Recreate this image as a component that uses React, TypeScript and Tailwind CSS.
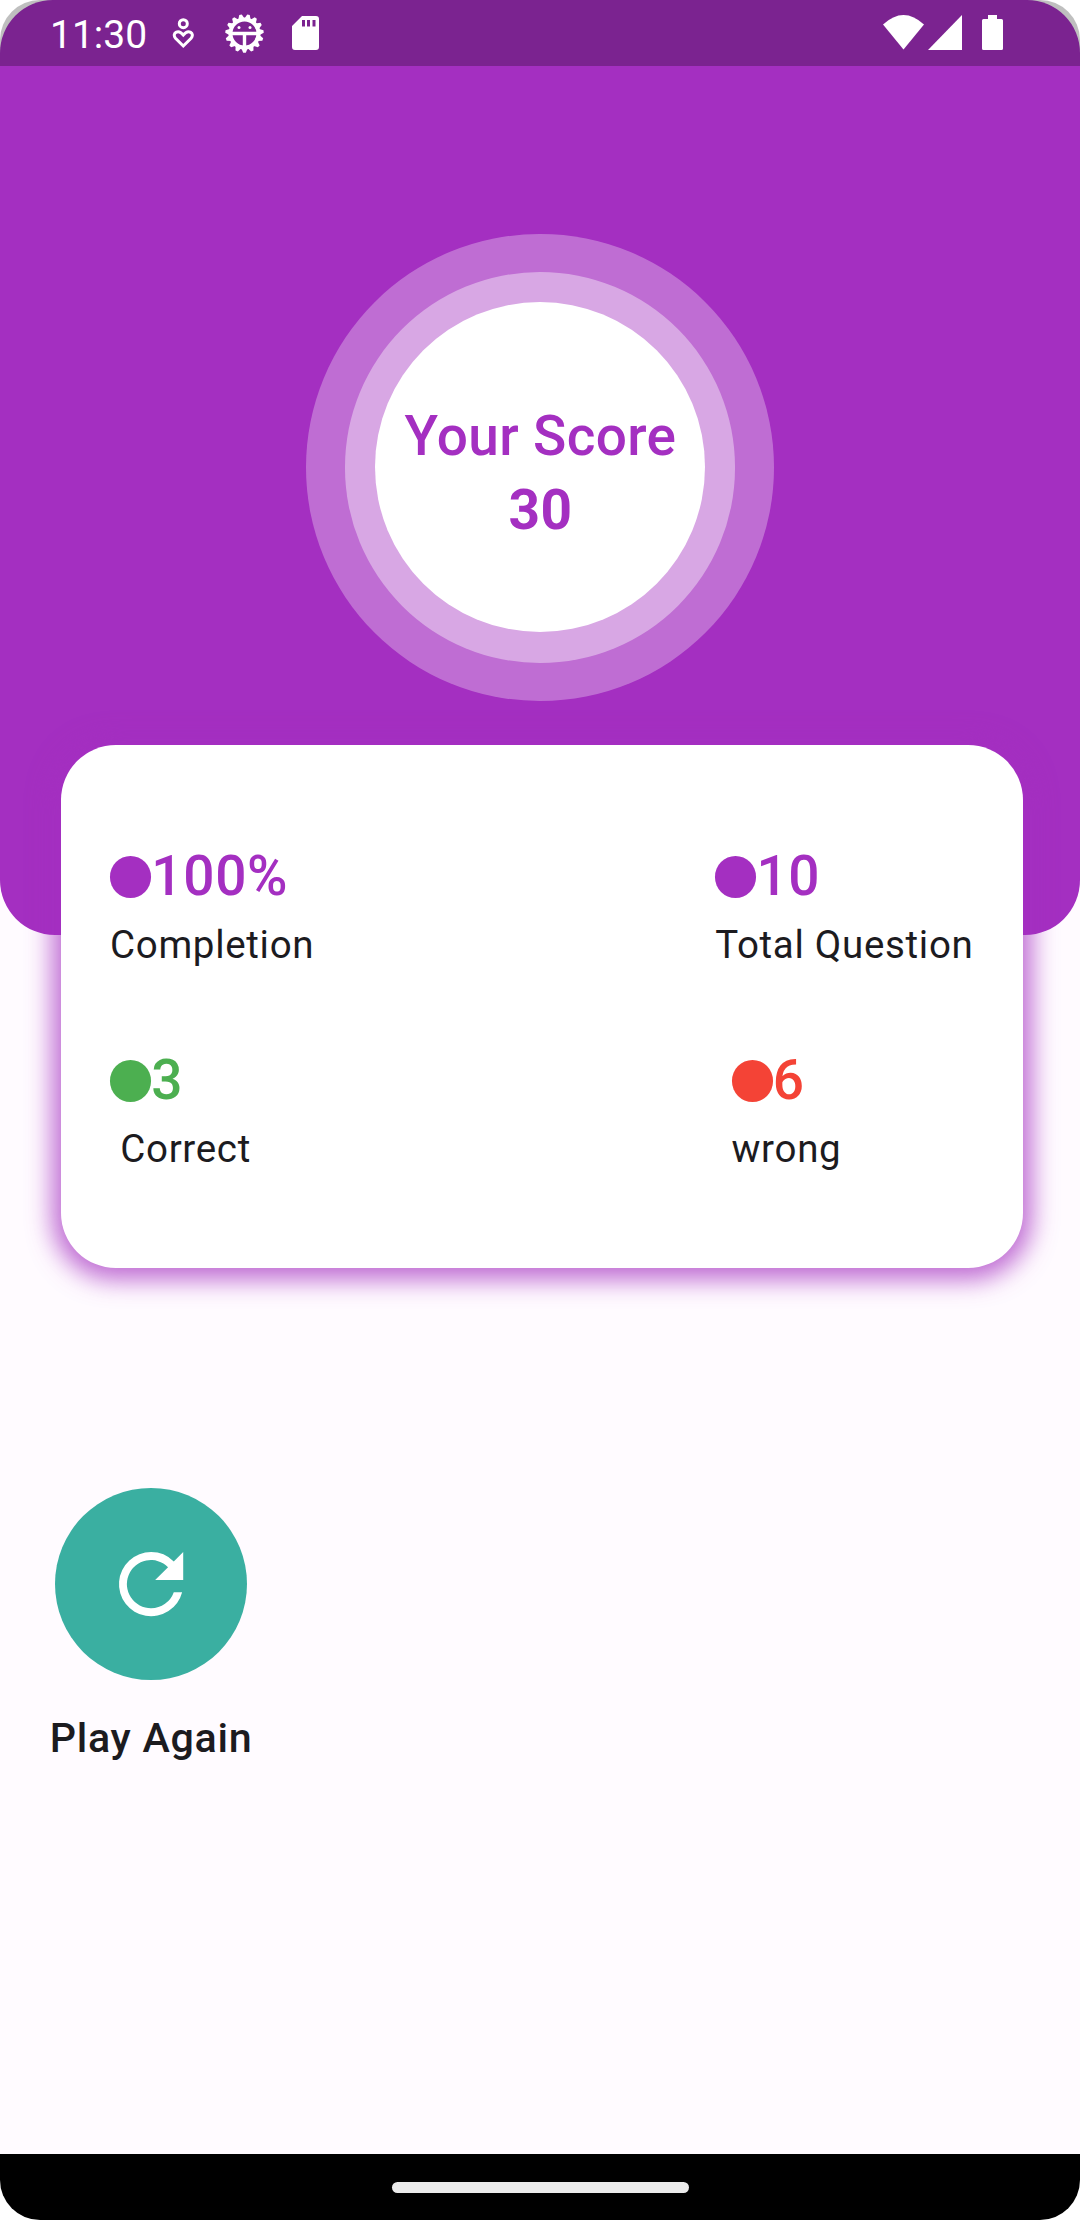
import React from "react";

function Stat({ value, label, color, dot, className = "" }: { value: string; label: string; color: string; dot: string; className?: string }) {
  return (
    <div className={`flex flex-col ${className}`}>
      <div className="flex h-[79px] items-center">
        <span className={`mt-[3px] size-[41.25px] shrink-0 rounded-full ${dot}`} />
        <span className={`pt-[2px] text-[55px] leading-[79px] font-medium tracking-[0.69px] ${color}`}>{value}</span>
      </div>
      <span className="mt-[2px] whitespace-pre text-[38.5px] leading-[55px] tracking-[0.69px] text-[#1c1b1f]">{label}</span>
    </div>
  );
}

const teeth = Array.from({ length: 15 }, (_, i) => i * 24);

function StatusBar() {
  return (
    <header className="flex h-[66px] items-start rounded-t-[40px] bg-black/25 text-white">
      <span className="ml-[50px] mt-[12px] w-[122px] text-[39px] leading-[46px]">11:30</span>
      <svg className="mt-[18px]" width="22" height="31" viewBox="0 0 22 31" fill="none" stroke="white" strokeWidth="3">
        <circle cx="11.3" cy="5.7" r="4" />
        <path d="M11.3 28 L3.5 20.2 C-0.5 15.5 6 10.5 11.3 17 C16.6 10.5 23.1 15.5 19.1 20.2 Z" />
      </svg>
      <svg className="ml-[31px] mt-[14px]" width="39" height="39" viewBox="0 0 39 39" fill="none" stroke="white">
        <circle cx="19.5" cy="19.5" r="14" strokeWidth="4" />
        {teeth.map((a) => (
          <path key={a} d="M16.200 5L18.200 0.300H20.800L22.800 5Z" fill="white" stroke="none" transform={`rotate(${a + 180} 19.5 19.5)`} />
        ))}
        <path d="M6 19.500H33M19.500 19.500V33" strokeWidth="3.4" />
        <circle cx="14" cy="13.5" r="1.500" fill="white" stroke="none" />
        <circle cx="25" cy="13.5" r="1.500" fill="white" stroke="none" />
      </svg>
      <svg className="ml-[28px] mt-[16px]" width="27" height="35" viewBox="0 0 27 35" fill="white">
        <path fillRule="evenodd" d="M10 0H24a3 3 0 0 1 3 3V31a3 3 0 0 1-3 3H3a3 3 0 0 1-3-3V10ZM10 4V10.500H13V4ZM15 4V10.500H18V4ZM20.500 4V10.500H23.500V4Z" />
      </svg>
      <svg className="ml-auto mt-[15px]" width="41" height="35" viewBox="0 0 41 35" fill="white">
        <path d="M0 9.500Q20.500-9.500 41 9.500L20.500 34.500Z" />
      </svg>
      <svg className="ml-[4px] mt-[15px]" width="34" height="35" viewBox="0 0 34 35" fill="white">
        <path d="M34 0V35H0Z" />
      </svg>
      <svg className="ml-[20px] mr-[77px] mt-[15px]" width="21" height="35" viewBox="0 0 21 35" fill="white">
        <path d="M6 0H15V4H19.500Q21 4 21 5.500V33.500Q21 35 19.500 35H1.500Q0 35 0 33.500V5.500Q0 4 1.500 4H6Z" />
      </svg>
    </header>
  );
}

export default function App() {
  return (
    <div className="h-[2220px] w-[1080px] overflow-hidden bg-white font-['Roboto',sans-serif]">
      <div className="flex h-full flex-col rounded-t-[53px] rounded-b-[40px] bg-white">
        <section className="flex h-[2154px] flex-col rounded-t-[53px] bg-[#fffbff]">
          <div className="h-[935px] shrink-0 rounded-t-[53px] rounded-b-[55px] bg-[#a42fc1]">
            <StatusBar />
            <div className="mx-auto mt-[167.500px] flex size-[467.500px] items-center justify-center rounded-full bg-white/30">
              <div className="flex size-[390.500px] items-center justify-center rounded-full bg-white/40">
                <div className="flex size-[330px] flex-col items-center justify-center rounded-full bg-white pt-[12px] pl-px text-[55px] leading-[74px] tracking-[0.35px] text-[#a42fc1]">
                  <span className="font-medium whitespace-nowrap">Your Score</span>
                  <span className="font-bold">30</span>
                </div>
              </div>
            </div>
          </div>

          <div className="-mt-[190px] ml-[60.500px] flex h-[522.500px] w-[962.500px] shrink-0 flex-col rounded-[55px] bg-white px-[49.500px] pt-[91px] shadow-[0_3px_24px_8.25px_rgba(164,47,193,0.7)]">
            <div className="flex h-[204px] justify-between">
              <Stat value="100%" label="Completion" color="text-[#a42fc1]" dot="bg-[#a42fc1]" />
              <Stat value="10" label="Total Question" color="text-[#a42fc1]" dot="bg-[#a42fc1]" />
            </div>
            <div className="flex justify-between">
              <Stat value="3" label=" Correct" color="text-[#4caf50]" dot="bg-[#4caf50]" />
              <Stat value="6" label="wrong" color="text-[#f44336]" dot="bg-[#f44336]" className="w-[242px]" />
            </div>
          </div>

          <div className="ml-[50px] mt-[220px] flex w-[202px] flex-col items-center">
            <button className="flex size-[192.500px] items-center justify-center rounded-full bg-[#3aafa1]">
              <svg width="96.250" height="96.250" viewBox="0 0 24 24" fill="white">
                <path d="M17.650 6.350A7.958 7.958 0 0 0 12 4a8 8 0 1 0 7.730 10h-2.080A5.990 5.990 0 0 1 12 18a6 6 0 1 1 4.220-10.220L13 11h7V4z" />
              </svg>
            </button>
            <span className="mt-[28px] whitespace-nowrap text-[41.250px] leading-[60px] font-medium tracking-[0.69px] text-[#1c1b1f]">Play Again</span>
          </div>
        </section>

        <footer className="flex h-[66px] shrink-0 items-center justify-center rounded-b-[40px] bg-black">
          <span className="h-[11px] w-[297px] rounded-full bg-[#ebebeb]" />
        </footer>
      </div>
    </div>
  );
}
